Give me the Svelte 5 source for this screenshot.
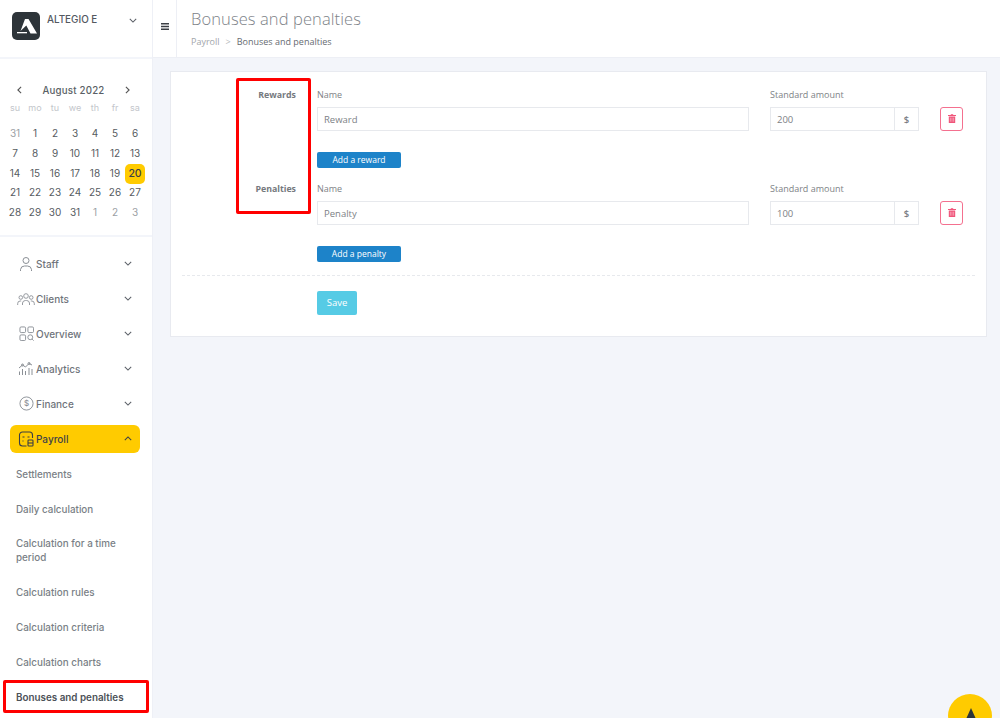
<script>
  const week = ['su','mo','tu','we','th','fr','sa'];
  const days = [
    [31,1,2,3,4,5,6],[7,8,9,10,11,12,13],[14,15,16,17,18,19,20],[21,22,23,24,25,26,27],[28,29,30,31,1,2,3]
  ].map((r,i)=>r.map((d,j)=>({d, muted:(i===0&&j===0)||(i===4&&j>3), today:d===20})));
  const menu = ['Staff','Clients','Overview','Analytics','Finance'];
  const sub = ['Settlements','Daily calculation','Calculation for a time period','Calculation rules','Calculation criteria','Calculation charts','Bonuses and penalties'];
  const sections = [
    {label:'Rewards', name:'Reward', amount:'200', add:'Add a reward'},
    {label:'Penalties', name:'Penalty', amount:'100', add:'Add a penalty'}
  ];
</script>

<div class="page">
  <aside class="side">
    <div class="brand">
      <div class="logo">
        <svg viewBox="0 0 28 28" width="28" height="28"><rect width="28" height="28" rx="5" fill="#2d3439"/><path d="M13 7 H16.500 L25 21.500 H18.500 L14.300 13.500 L8.500 19 Z" fill="#fff"/><rect x="5" y="20" width="10" height="1.300" fill="#fff"/></svg>
      </div>
      <span class="bname">ALTEGIO E</span>
      <svg class="chev bchev" viewBox="0 0 10 6" width="8" height="5"><path d="M1 1l4 4 4-4" fill="none" stroke="#5a5f66" stroke-width="1.3"/></svg>
    </div>

    <div class="cal">
      <div class="calhead">
        <svg viewBox="0 0 6 10" width="5" height="8"><path d="M5 1L1 5l4 4" fill="none" stroke="#555" stroke-width="1.4"/></svg>
        <span>August 2022</span>
        <svg viewBox="0 0 6 10" width="5" height="8"><path d="M1 1l4 4-4 4" fill="none" stroke="#555" stroke-width="1.4"/></svg>
      </div>
      <div class="grid wk">{#each week as w}<span>{w}</span>{/each}</div>
      <div class="grid dates">
        {#each days as row}
          {#each row as c}
            <span class:muted={c.muted} class:today={c.today}>{c.d}</span>
          {/each}
        {/each}
      </div>
    </div>

    <nav class="nav">
      {#each menu as m, i}
        <div class="item">
          <span class="ic">
            {#if i===0}
              <svg viewBox="0 0 16 16" width="16" height="16" fill="none" stroke="#8b9096" stroke-width="1"><circle cx="8" cy="4.5" r="3"/><path d="M2.5 15v-1.5a4 4 0 0 1 4-3.5h3a4 4 0 0 1 4 3.5V15"/></svg>
            {:else if i===1}
              <svg viewBox="0 0 18 14" width="18" height="14" fill="none" stroke="#8b9096" stroke-width=".9"><circle cx="9" cy="4" r="2.3"/><circle cx="3.8" cy="5.5" r="1.8"/><circle cx="14.2" cy="5.5" r="1.8"/><path d="M5.5 13v-2a3 3 0 0 1 3-2.5h1a3 3 0 0 1 3 2.5v2M.7 13v-1.5a2.5 2.5 0 0 1 2.5-2.5h1M17.3 13v-1.5a2.5 2.5 0 0 0-2.5-2.5h-1"/></svg>
            {:else if i===2}
              <svg viewBox="0 0 16 16" width="15" height="15" fill="none" stroke="#8b9096" stroke-width="1"><rect x="1" y="1" width="6" height="6" rx="1.3"/><rect x="9.5" y="1" width="6" height="6" rx="1.3"/><rect x="1" y="9.5" width="6" height="6" rx="1.3"/><circle cx="12" cy="12" r="2.6"/><path d="M14 14l1.6 1.6"/></svg>
            {:else if i===3}
              <svg viewBox="0 0 16 14" width="16" height="14" fill="none" stroke="#8b9096" stroke-width="1"><path d="M1 6l3.5-3 3 2 3.5-3.5 3 1.5"/><circle cx="4.500" cy="3" r="1"/><circle cx="11" cy="1.500" r="1"/><path d="M1.500 13V9.500M4.500 13V7M7.500 13V9M11 13V6M14 13V7" /></svg>
            {:else}
              <svg viewBox="0 0 16 16" width="15" height="15" fill="none" stroke="#8b9096" stroke-width="1"><circle cx="8" cy="8" r="7"/><text x="8" y="11" font-size="8.500" font-family="Inter" text-anchor="middle" fill="#8b9096" stroke="none">$</text></svg>
            {/if}
          </span>
          <span class="lbl">{m}</span>
          <svg class="chev" viewBox="0 0 10 6" width="8" height="5"><path d="M1 1l4 4 4-4" fill="none" stroke="#5a5f66" stroke-width="1.3"/></svg>
        </div>
      {/each}
      <div class="item active">
        <span class="ic">
          <svg viewBox="0 0 16 16" width="16" height="16" fill="none" stroke="#3b3f45" stroke-width="1.1"><path d="M14.500 7V4a3 3 0 0 0-3-3h-7a3 3 0 0 0-3 3v8a3 3 0 0 0 3 3h4"/><path d="M4.500 6h2M4.500 10h1M9.500 6h2"/><rect x="10" y="9" width="5" height="6" rx=".8"/><path d="M10 12h5"/></svg>
        </span>
        <span class="lbl">Payroll</span>
        <svg class="chev" viewBox="0 0 10 6" width="8" height="5"><path d="M1 5l4-4 4 4" fill="none" stroke="#3b3f45" stroke-width="1.3"/></svg>
      </div>
      <div class="subs">
        {#each sub as s, i}
          <div class="sub" class:cur={i===6}>{s}</div>
        {/each}
      </div>
    </nav>
    <div class="mark markc"></div>
  </aside>

  <div class="main">
    <header class="top">
      <div class="burger">
        <svg viewBox="0 0 8 7" width="8" height="7"><path d="M0 .75h8M0 3.500h8M0 6.250h8" stroke="#3b3f45" stroke-width="1.300"/></svg>
      </div>
      <div class="titles">
        <h1>Bonuses and penalties</h1>
        <div class="crumbs"><span class="c1">Payroll</span><span class="sep">&gt;</span><span class="c2">Bonuses and penalties</span></div>
      </div>
    </header>

    <section class="content">
      <div class="card">
        <div class="mark markf"></div>
        {#each sections as s}
          <div class="block">
            <div class="blabel">{s.label}</div>
            <div class="bbody">
              <div class="fields">
                <div class="fname">
                  <div class="flabel">Name</div>
                  <div class="inp">{s.name}</div>
                </div>
                <div class="famt">
                  <div class="flabel">Standard amount</div>
                  <div class="grp"><div class="inp amt">{s.amount}</div><div class="addon">$</div></div>
                </div>
                <button class="del" aria-label="Delete">
                  <svg viewBox="0 0 10 11" width="8" height="9"><path d="M3.500 1V.3h3V1H10v1.300H0V1zM1 3h8v8H1z" fill="#f0557a" stroke="none"/><path d="M3 4.500v5M5 4.500v5M7 4.500v5" stroke="#fff" stroke-width=".5"/></svg>
                </button>
              </div>
              <button class="add">{s.add}</button>
            </div>
          </div>
        {/each}
        <div class="rule"></div>
        <button class="save">Save</button>
      </div>
    </section>
  </div>
</div>

<div class="fab">
  <svg viewBox="0 0 44 44" width="44" height="44"><path d="M23 14 L32 34 H14 Z" fill="#2d3439"/></svg>
</div>

<style>
  :global(body){margin:0;background:#f3f5fa;overflow:hidden}
  *{box-sizing:border-box}
  .page{display:flex;height:718px;overflow:hidden;font-family:Inter,"Open Sans",sans-serif}
  .side{width:153px;flex:none;background:#fff;border-right:1px solid #eef0f6;position:relative;height:718px;overflow:hidden}
  .brand{height:59px;display:flex;align-items:flex-start;padding:12px 0 0 12px;border-bottom:2px solid #f3f5fa;position:relative;margin-right:-1px}
  .bname{font-size:9.900px;font-weight:500;color:#54595f;margin:1px 0 0 7px;line-height:13px}
  .bchev{position:absolute;left:129px;top:18px}
  .logo{height:28px}
  .cal{padding:24px 6px 0 5px;height:178px;border-bottom:2px solid #f3f5fa;margin-right:-1px}
  .calhead{display:flex;justify-content:space-between;align-items:center;padding:0 17px 0 12px;height:14px;font-size:9.700px;font-weight:500;color:#5a5f66;letter-spacing:.2px}
  .grid{display:grid;grid-template-columns:repeat(7,20px);justify-items:center;text-align:center}
  .wk{height:15px;margin-top:3px;font-size:9px;color:#c3c6cb;line-height:15px}
  .dates{margin-top:9px;font-size:10px;color:#565b61;grid-auto-rows:19.750px;line-height:19.750px}
  .muted{color:#9b9fa5}
  .dates span{width:20px}
  .today{background:#ffcb00;border-radius:5px;color:#3b3f45;font-size:10.500px;font-weight:500;height:20px}
  .nav{padding-top:9px}
  .item{height:35px;display:flex;align-items:center;padding:0 20px 0 16px;position:relative;font-size:10px;font-weight:500;color:#6f747b}
  .ic{width:20px;display:flex;justify-content:center;margin-right:0}
  .lbl{margin-left:0;flex:1;padding-left:0}
  .item .chev{margin-left:auto}
  .active{height:28px;margin:3.500px 12px 4px 10px;background:#ffcb00;border-radius:6px;padding:0 8px 0 6px;color:#3f4348}
  .sub{padding:10.400px 16px;line-height:14px;font-size:9.850px;font-weight:500;color:#7a7f86}
  .sub.cur{color:#4c5157;font-weight:600}
  .mark{position:absolute;border:3px solid #f00;border-radius:2px;pointer-events:none}
  .markc{left:3px;top:680px;width:146px;height:33px}
  .main{flex:1;min-width:0;display:flex;flex-direction:column}
  .top{height:58px;background:#fff;border-bottom:1px solid #edeff5;display:flex;flex:none}
  .burger{width:24px;border-right:1px solid #edeff5;display:flex;align-items:center;justify-content:center;padding-bottom:5px}
  .titles{padding:8px 0 0 14px}
  h1{margin:0;font-family:"Open Sans",sans-serif;font-weight:300;font-size:16.500px;line-height:21px;color:#7d8288;letter-spacing:.1px}
  .crumbs{margin-top:6.500px;font-family:"Open Sans",sans-serif;font-size:9px;line-height:12px;display:flex}
  .c1{color:#a2a6ab}.sep{color:#b5b8bd;margin:0 6px}.c2{color:#666b71}
  .content{flex:1;padding:13px 13px 0 17px}
  .card{position:relative;background:#fff;border:1px solid #e8eaf0;height:266px;padding:0 11px;font-family:"Open Sans",sans-serif}
  .markf{left:65px;top:6px;width:75px;height:136px}
  .block{display:flex;height:94.200px}
  .blabel{width:114px;text-align:right;font-size:8.800px;font-weight:700;color:#75797e;padding-top:16.500px;line-height:12px;flex:none}
  .bbody{padding-left:21px;flex:1}
  .fields{display:flex;padding-top:16.500px}
  .flabel{font-size:9px;line-height:12px;color:#7e8286;margin-bottom:6.500px}
  .fname{width:432px}
  .famt{width:149px;margin-left:21px}
  .inp{height:24px;border:1px solid #e7e9ed;font-size:9.500px;line-height:23px;padding-left:6px;color:#7d8185;background:#fff}
  .grp{display:flex}
  .amt{flex:1}
  .addon{width:24px;height:24px;border:1px solid #e7e9ed;border-left:0;font-size:9.500px;font-weight:600;line-height:23px;text-align:center;color:#777c82}
  .del{width:23px;height:24px;margin:18.500px 0 0 21px;border:1px solid #f4708f;border-radius:3px;background:#fff;padding:0 0 1px;display:flex;align-items:center;justify-content:center}
  .add{display:block;width:84px;height:16px;margin-top:20.500px;border:0;border-radius:2px;background:#1d83c9;color:#fff;font-family:"Open Sans",sans-serif;font-size:8.500px;font-weight:500;padding:0;line-height:16px}
  .rule{border-top:1px dashed #e7e9ed;margin-top:14.600px}
  .save{display:block;width:40px;height:24px;margin:15px 0 0 135px;border:0;border-radius:2px;background:#56cbe5;color:#fff;font-family:"Open Sans",sans-serif;font-size:9.500px;font-weight:500;padding:0}
  .fab{position:fixed;left:948px;top:694px;width:44px;height:44px;border-radius:50%;background:#ffcb00}
  .fab svg{display:block}
</style>
